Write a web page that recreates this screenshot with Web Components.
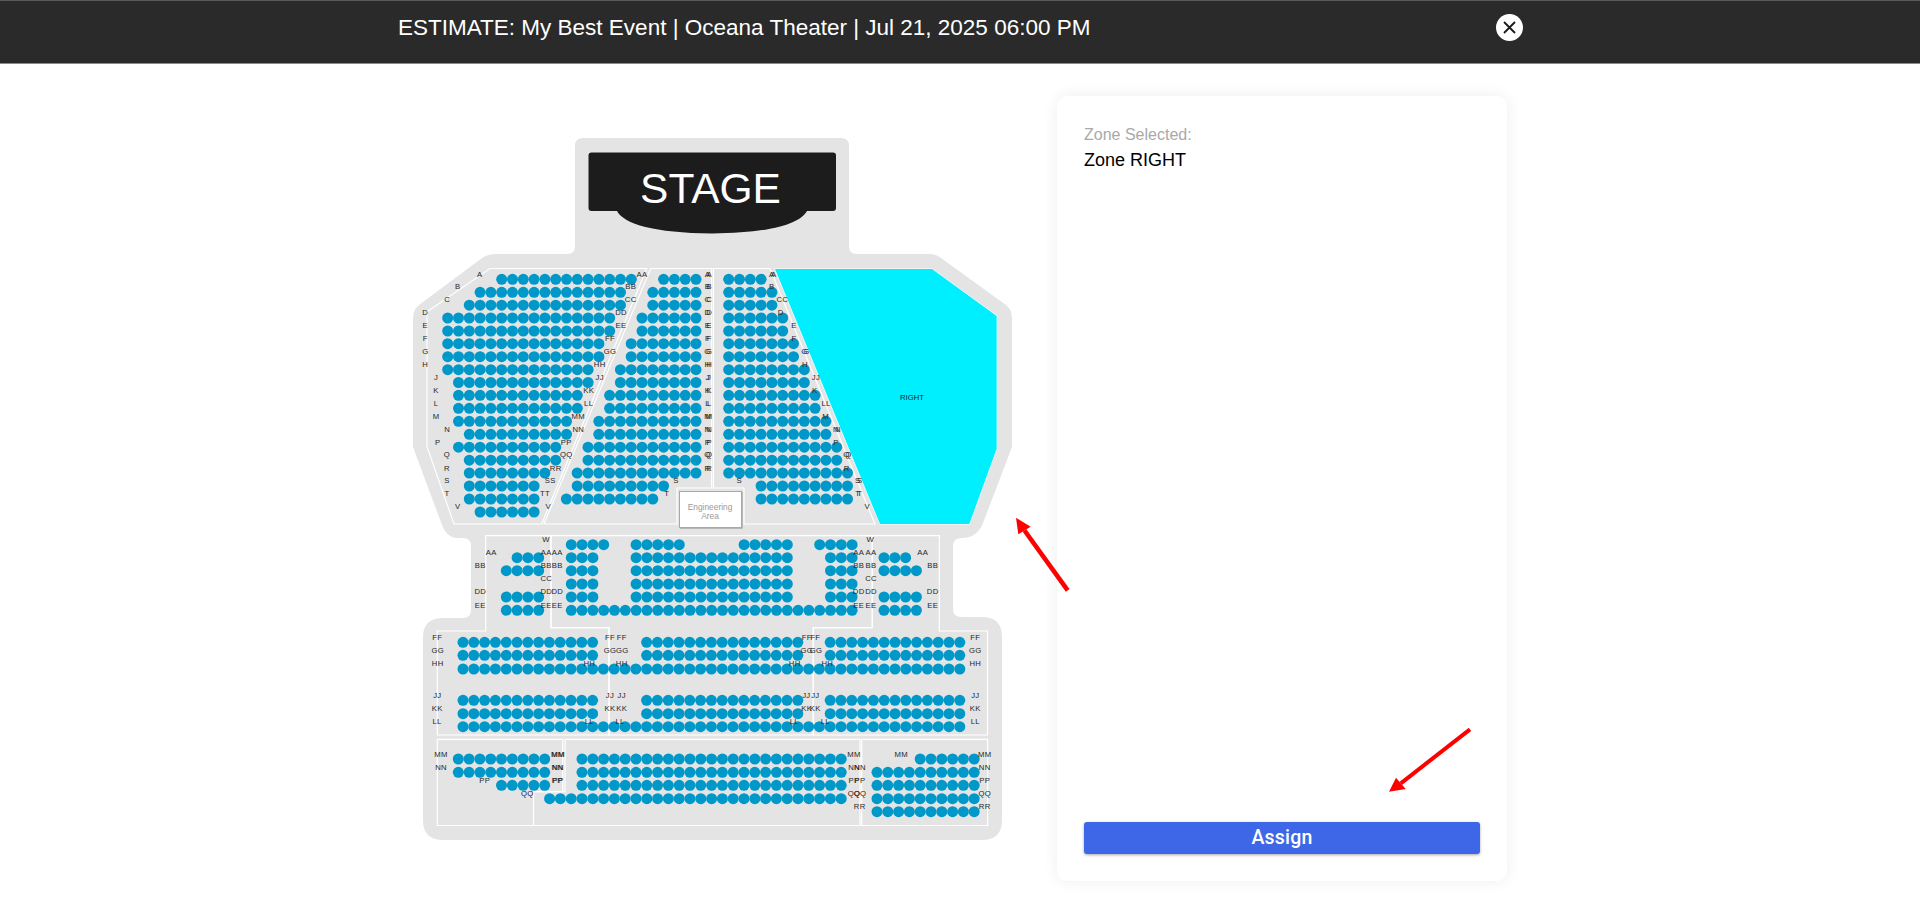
<!DOCTYPE html>
<html lang="en"><head><meta charset="utf-8"><title>Estimate</title>
<style>html,body{margin:0;background:#fff;height:100%;overflow:hidden}body{font-family:"Liberation Sans",Arial,sans-serif}</style>
</head><body>
<estimate-page>
  <title-bar slot="bar">ESTIMATE: My Best Event | Oceana Theater | Jul 21, 2025 06:00 PM</title-bar>
  <seat-map slot="map"></seat-map>
  <zone-card slot="card" zone="Zone RIGHT"></zone-card>
</estimate-page>
<pointer-arrows></pointer-arrows>
<script>
class EstimatePage extends HTMLElement{constructor(){super();this.attachShadow({mode:'open'}).innerHTML=`<style>
:host{display:flex;flex-direction:column;height:919px}
.row{width:1124px;margin:0 auto;display:flex;padding-top:32px;box-sizing:border-box}
</style><slot name="bar"></slot><div class="row"><slot name="map"></slot><slot name="card"></slot></div>`}}
class TitleBar extends HTMLElement{constructor(){super();this.attachShadow({mode:'open'}).innerHTML=`<style>
:host{display:block;height:64px;box-sizing:border-box;background:#2a2a2a;border-top:1px solid #5a5a5a;border-bottom:1px solid #8a8a8a;color:#fff}
.in{width:1124px;height:100%;margin:0 auto;display:flex;justify-content:space-between;align-items:flex-start;font:22.5px/1 "Liberation Sans",Arial,sans-serif}
.t{margin-top:16px;white-space:nowrap}
.x{margin:13px -1px 0 0;width:27px;height:27px;border-radius:50%;background:#fff;display:flex;align-items:center;justify-content:center}
</style><div class="in"><div class="t"><slot></slot></div><div class="x"><svg width="15" height="15" viewBox="0 0 15 15"><path d="M2 2 13 13M13 2 2 13" stroke="#1a1a1a" stroke-width="1.8" fill="none"/></svg></div></div>`}}
class ZoneCard extends HTMLElement{constructor(){super();const z=this.getAttribute('zone');this.attachShadow({mode:'open'}).innerHTML=`<style>
:host{display:flex;flex-direction:column;justify-content:space-between;width:450px;height:785px;box-sizing:border-box;padding:27px;background:#fff;border-radius:10px;box-shadow:0 0 16px rgba(0,0,0,.07);font-family:"Liberation Sans",Arial,sans-serif}
.l{font-size:16px;line-height:24px;color:#a9a9a9}.v{font-size:18px;line-height:26px;color:#000}
button{all:unset;box-sizing:border-box;display:block;width:100%;height:32px;background:#3d67e6;color:#fff;text-align:center;border-radius:3px;font:500 19.5px/32px Roboto,sans-serif;letter-spacing:.2px;box-shadow:0 1px 3px rgba(0,0,0,.35)}
</style><div><div class="l">Zone Selected:</div><div class="v">${z}</div></div><button>Assign</button>`}}
class SeatMap extends HTMLElement{constructor(){super();
const S=[];const row=(x0,y,cols)=>{for(const c of cols)S.push([x0+10.8*c,y])};const R=(a,b)=>{const o=[];for(let i=a;i<=b;i++)o.push(i);return o};
const Y=[279.3,292.3,305.2,318,331,343.7,356.7,369.7,382.5,395.3,408.3,421.3,434.3,447.2,460.2,473,486,499,512];
[[5,17],[3,16],[2,16],[0,15],[0,15],[0,14],[0,14],[0,13],[1,13],[1,12],[1,12],[1,11],[2,11],[1,10],[2,10],[2,9],[2,8],[2,8],[3,8]].forEach((r,i)=>row(447.7,Y[i],R(r[0],r[1])));
[[0,3],[0,4],[0,4],[0,5],[0,5],[0,6],[0,6],[0,7],[0,7],[0,8],[0,8],[0,9],[0,9],[0,10],[0,10],[0,11],[3,11],[4,12]].forEach((r,i)=>row(696,Y[i],R(-r[1],-r[0])));
[[0,3],[0,4],[0,4],[0,5],[0,5],[0,6],[0,6],[0,7],[0,7],[0,8],[0,8],[0,9],[0,9],[0,10],[0,10],[0,11],[3,11],[3,11]].forEach((r,i)=>row(728.7,Y[i],R(r[0],r[1])));
const Z=[544.7,557.7,570.7,584,597,610.3];
row(506.3,Z[1],R(1,3));row(506.3,Z[2],R(0,3));row(506.3,Z[4],R(0,3));row(506.3,Z[5],R(0,3));
row(884,Z[1],R(0,2));row(884,Z[2],R(0,3));row(884,Z[4],R(0,3));row(884,Z[5],R(0,3));
row(571.3,Z[0],[...R(0,3),...R(6,10),...R(16,20),...R(23,26)]);
for(const i of [1,2,3,4])row(571.3,Z[i],[...R(0,2),...R(6,20),...R(24,26)]);
row(571.3,Z[5],R(0,26));
for(const y of [642.3,655.3,700.3,713.7])row(463,y,[...R(0,12),...R(17,31),...R(34,46)]);
for(const y of [669,726.7])row(463,y,R(0,46));
row(458.3,759,R(0,8));row(458.3,772.3,R(0,8));row(458.3,785.3,R(4,8));
for(const y of [759,772.3,785.3])row(582,y,R(0,24));row(582,798.7,R(-3,24));
row(877,759,R(4,9));for(const y of [772.3,785.3,798.7,811.7])row(877,y,R(0,9));

const L=[];const lab=(ox,oy,arr)=>{for(const [t,x,y] of arr)L.push([t,ox+x/3,oy+y/3])};
lab(400,120,[['A',239,463],['B',173,499],['C',142,538],['D',76,577],['E',76,616],['AA',726,463],['BB',692,499],['CC',692,538],['DD',663,577],['EE',663,616]]);
lab(400,330,[['F',76,25],['G',76,64],['H',76,103],['J',108,142],['K',108,181],['L',108,220],['M',108,259],['N',142,298],['P',113,337],['Q',141,373],['R',141,415],['S',141,451],['T',141,490],['V',173,529],['FF',630,25],['GG',630,64],['HH',599,103],['JJ',599,142],['KK',566,181],['LL',566,220],['MM',535,259],['NN',535,298],['PP',499,337],['QQ',499,373],['RR',467,415],['SS',451,451],['TT',435,490],['V',445,529],['W',438,628],['S',828,451],['T',800,490]]);
'ABCDEFGHJKLMNPQR'.split('').forEach((c,i)=>{const y=[73,110,149,187,226,265,304,343,382,421,460,499,538,577,614,655][i];lab(700,250,[[c,22.5,y],[c,27.5,y]])});
lab(700,250,[['A',215,73],['A',221,73],['B',215,110],['CC',247,149],['D',242,187],['E',282,226],['F',282,265],['G',313,304],['G',319,304],['H',315,343],['JJ',348,382],['K',344,421],['LL',378,460],['M',377,499],['N',408,538],['N',414,538],['P',408,577],['Q',439,614],['Q',445,614],['R',440,655],['S',473,691],['S',479,691],['T',473,730],['T',479,730],['V',502,769],['S',118,691],['T',118,730]]);
lab(460,520,[['AA',94,97],['BB',61,136],['DD',61,214],['EE',61,256],['AA',259,97],['AA',292,97],['BB',259,136],['BB',292,136],['CC',259,175],['DD',259,214],['DD',292,214],['EE',259,256],['EE',292,256],['FF',450,352],['FF',485,352],['GG',450,391],['GG',487,391],['HH',388,430],['HH',485,430],['JJ',450,526],['JJ',485,526],['KK',450,565],['KK',485,565],['LL',388,604],['LL',480,604]]);
lab(740,520,[['W',391,58],['AA',356,97],['AA',393,97],['AA',548,97],['BB',356,136],['BB',393,136],['BB',578,136],['CC',393,175],['DD',356,214],['DD',393,214],['DD',578,214],['EE',356,256],['EE',393,256],['EE',578,256],['FF',200,352],['FF',226,352],['GG',200,391],['GG',228,391],['HH',164,430],['HH',262,430],['JJ',199,526],['JJ',226,526],['KK',200,565],['KK',226,565],['LL',163,604],['LL',256,604],['FF',706,352],['GG',706,391],['HH',706,430],['JJ',706,526],['KK',706,565],['LL',706,604]]);
lab(410,620,[['FF',82,52],['GG',83,91],['HH',83,130],['JJ',82,226],['KK',82,265],['LL',81,304],['MM',93,403],['NN',93,442],['PP',224,481],['QQ',352,520],['MM',443,403],['MM',445,403],['NN',442,442],['NN',444,442],['PP',442,481],['PP',444,481]]);
lab(710,720,[['MM',432,103],['NN',432,142],['NN',450,142],['PP',432,181],['PP',450,181],['QQ',432,220],['QQ',450,220],['RR',449,259],['MM',574,103],['MM',824,103],['NN',824,142],['PP',824,181],['QQ',824,220],['RR',824,259]]);

const seats=S.map(([x,y])=>`<circle cx="${x.toFixed(1)}" cy="${y.toFixed(1)}" r="5.5"/>`).join('');
const labels=L.map(([t,x,y])=>`<text x="${x.toFixed(1)}" y="${(y+2.7).toFixed(1)}">${t}</text>`).join('');
const lines=['M490 268.5 H646.7 L541.7 524 H454 L427 446.7 V311.7 Z',
'M650.7 268.5 H711.7 V488 H677 V524 H544 Z',
'M713.5 268.5 H770 L875 524 H744 V488 H713.5 Z',
'M775 269 H932 L996.7 316 V448.7 L969.3 524 H880 Z',
'M485.7 631 V535.7 H551 V627.7 H609 V735 H437.3 V631 Z',
'M551 535.7 H872.3 V627.7 H813.3 V735 H609 V627.7 H551 Z',
'M872.3 535.7 H939.3 V631 H987.5 V735 H813.3 V627.7 H872.3 Z',
'M437.3 739.3 H562.7 V791.7 H533.5 V825.5 H437.3 Z',
'M565 739.3 H860 V825.5 H533.5 V791.7 H565 Z',
'M861.7 739.3 H987.7 V825.5 H861.7 Z'];
this.attachShadow({mode:'open'}).innerHTML=`<style>
:host{display:block;width:659px;height:785px}
svg{display:block}
.seats{fill:#0098c8}
.lab text{font:7.7px "Liberation Sans",Arial,sans-serif;fill:#262626;text-anchor:middle;letter-spacing:.3px}
.ln{fill:none;stroke:#fff;stroke-width:1.2}
</style>
<svg width="659" height="785" viewBox="398 96 659 785">
<path fill="#e4e4e4" d="M583 138H841Q849 138 849 146V246Q849 254 857 254H930Q936 254 941 258L1006 305Q1012 310 1012 318V447L983 523Q977 538 962 538Q953 538 953 546V609Q953 617 961 617H982Q1002 617 1002 637V820Q1002 840 982 840H443Q423 840 423 820V637Q423 618 443 618H463Q471 618 471 610V546Q471 538 463 538H458Q447 538 442 525L413 447V318Q413 310 419 305L482 258Q488 254 496 254H567Q575 254 575 246V146Q575 138 583 138Z"/>
<g class="ln">${lines.map(d=>`<path d="${d}"/>`).join('')}</g>
<path fill="#00efff" d="M775 269H932L996.7 316V448.7L969.3 524H880Z"/>
<path fill="#1c1c1c" d="M591.5 152.5H833Q836 152.5 836 155.5V208Q836 211 833 211H807C800 224 770 233 712 233.5C654 233 624 224 617 211H591.5Q588.5 211 588.5 208V155.5Q588.5 152.5 591.5 152.5Z"/>
<text x="710.5" y="203" text-anchor="middle" font-family="Liberation Sans,Arial,sans-serif" font-size="42.5" fill="#fff">STAGE</text>
<g class="seats">${seats}</g>
<g class="lab">${labels}</g>
<text x="912" y="399.5" text-anchor="middle" font-family="Liberation Sans,Arial,sans-serif" font-size="7.7" fill="#123">RIGHT</text>
<rect x="679.5" y="491.5" width="62" height="36" fill="#fff" stroke="#a8a8a8" stroke-width="1"/>
<path d="M680 528H742V492" fill="none" stroke="#a8a8a8" stroke-width="1.4"/>
<text x="710" y="509.5" text-anchor="middle" font-family="Liberation Sans,Arial,sans-serif" font-size="8.4" fill="#9a9a9a">Engineering</text>
<text x="710" y="518.5" text-anchor="middle" font-family="Liberation Sans,Arial,sans-serif" font-size="8.4" fill="#9a9a9a">Area</text>
</svg>`}}
class PointerArrows extends HTMLElement{constructor(){super();this.attachShadow({mode:'open'}).innerHTML=`<style>
:host{position:absolute;left:0;top:0;width:1920px;height:919px;pointer-events:none}
</style><svg width="1920" height="919" viewBox="0 0 1920 919"><g fill="#ff0000">
<path d="M1016 517.7 1030.7 526.7 1018.3 534.3Z"/><path d="M1024.5 530.5 1067.7 590.3" stroke="#f00" stroke-width="4.6"/>
<path d="M1389 791.7 1396 777.7 1405.7 789Z"/><path d="M1400.8 783.3 1470 729.3" stroke="#f00" stroke-width="4"/>
</g></svg>`}}
customElements.define('estimate-page',EstimatePage);customElements.define('title-bar',TitleBar);customElements.define('zone-card',ZoneCard);customElements.define('seat-map',SeatMap);customElements.define('pointer-arrows',PointerArrows);
</script>
</body></html>
